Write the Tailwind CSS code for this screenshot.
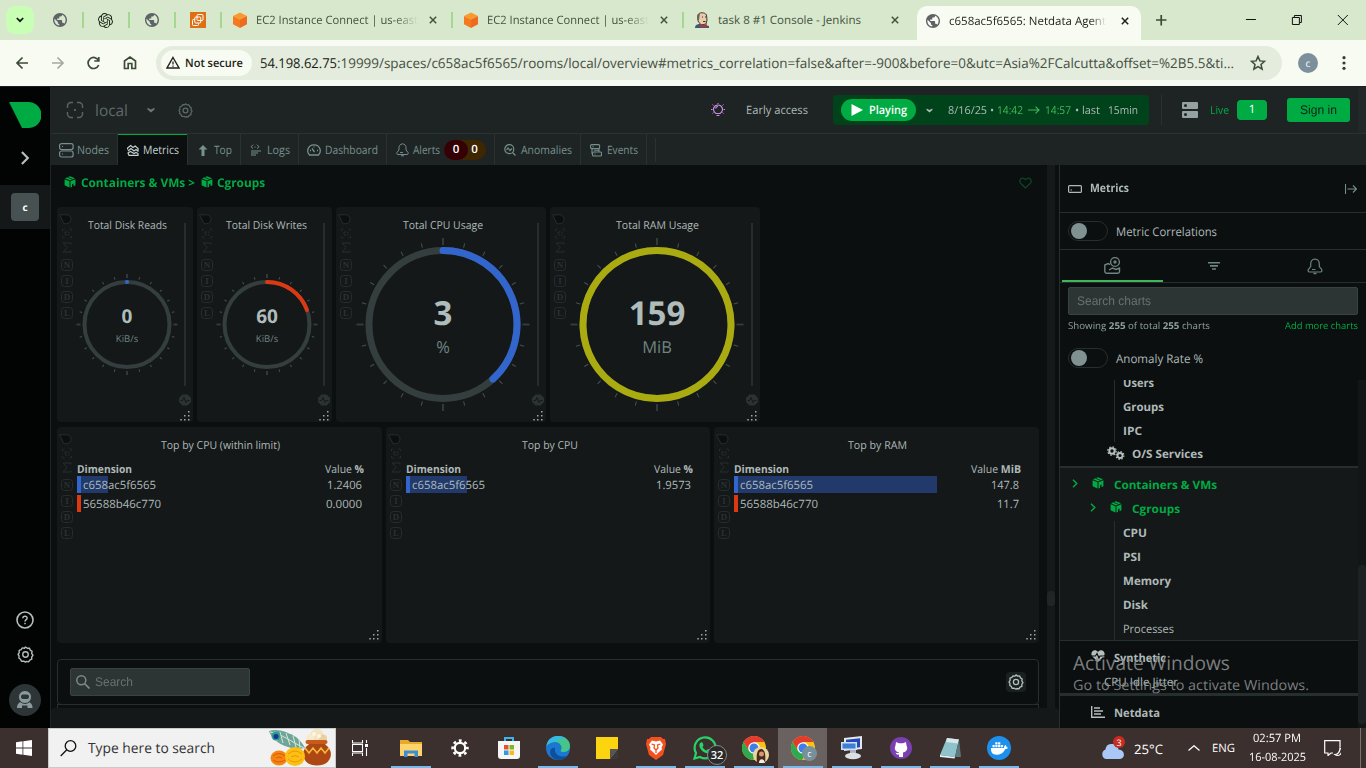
<!DOCTYPE html>
<html lang="en">
<head>
<meta charset="utf-8">
<title>c658ac5f6565: Netdata Agent</title>
<script src="https://cdn.jsdelivr.net/npm/@tailwindcss/browser@4"></script>
</head>
<body class="w-[1366px] h-[768px] overflow-hidden bg-[#0b0f10] font-['Open_Sans','Noto_Sans',sans-serif] text-[11.5px] whitespace-nowrap text-[#aeb9b8] leading-none [text-rendering:geometricPrecision]">
<svg class="hidden">
  <defs>
    <symbol id="globe" viewBox="2 2 20 20"><path fill="#5f6368" d="M12 2C6.480 2 2 6.480 2 12s4.480 10 10 10 10-4.480 10-10S17.520 2 12 2zm-1 17.930c-3.950-.49-7-3.850-7-7.930 0-.62.08-1.210.21-1.790L9 15v1c0 1.100.9 2 2 2v1.930zm6.900-2.540c-.26-.81-1-1.390-1.900-1.390h-1v-3c0-.55-.45-1-1-1H8v-2h2c.55 0 1-.45 1-1V7h2c1.100 0 2-.9 2-2v-.41c2.930 1.190 5 4.060 5 7.410 0 2.080-.8 3.970-2.100 5.390z"/></symbol>
    <symbol id="cube" viewBox="0 0 16 16"><path d="M8 .5 15 4 8 7.500 1 4z" fill="#fb9a2c"/><path d="M1 4l7 3.500V16l-7-3.700z" fill="#f47a20"/><path d="M15 4 8 7.500V16l7-3.700z" fill="#ee6a1f"/></symbol>
    <symbol id="x" viewBox="0 0 8 8"><path d="M.8.8l6.400 6.400M7.200.8.8 7.200" stroke="currentColor" stroke-width="1.500" fill="none"/></symbol>
    <symbol id="box" viewBox="0 0 12 12"><path d="M6 .3 11 2.300 6 4.500 1 2.300z" fill="currentColor"/><path d="M.6 3.200 5.500 5.300V11.600L.6 9.300z" fill="currentColor"/><path d="M11.400 3.200 6.500 5.300V11.600L8 10.900V8.300l1.500-.7v2.600l1.900-.9z" fill="currentColor"/><path d="M3.500 1.200l5 2.200" stroke="#0b0f10" stroke-width=".7"/></symbol>
    <symbol id="gear" viewBox="0 0 16 16"><path d="M8 .9l1.700 1.200 2-.1.800 1.900 1.700 1.100-.4 2L15 8.700l-1.200 1.700.1 2-1.900.8-1.100 1.700-2-.4L8 15.200l-1.700-1-2.100.2-.9-1.900-1.600-1.200.3-2L1 8l1.100-1.700-.1-2.100 1.900-.8L5 1.800l2 .3z" fill="none" stroke="currentColor" stroke-width="1.300" stroke-linejoin="round"/><circle cx="8" cy="8" r="2.600" fill="none" stroke="currentColor" stroke-width="1.300"/></symbol>
    <symbol id="bell" viewBox="0 0 16 17"><path d="M8 1C5 1.300 3.700 3.500 3.700 6v2.500L1.300 11.500C.8 13 1.200 14 2.500 14h11c1.300 0 1.700-1 1.200-2.500L12.300 8.500V6C12.300 3.500 11 1.300 8 1zM5 11.500h3.500" fill="none" stroke="currentColor" stroke-width="1.200"/><path d="M6.500 15.500h3" stroke="currentColor" stroke-width="1.400"/></symbol>
    <symbol id="chev" viewBox="0 0 6 9"><path d="M1 .7 4.800 4.500 1 8.300" fill="none" stroke="currentColor" stroke-width="1.400"/></symbol>
    <symbol id="down" viewBox="0 0 8 6"><path d="M.5.7 4 2.400 7.500.7v1.800L4 5.500.5 2.500z" fill="currentColor"/></symbol>
    <symbol id="tools" viewBox="0 0 16 108">
      <g fill="none" stroke="#272d2e" stroke-width="1">
        <path d="M.5.800h7c6 0 6 8.900 0 8.900H5z" fill="#0b0f10"/>
        <path d="M3.500 17v-2h2M10.500 15h2v2M12.500 22v2h-2M5.500 24h-2v-2M6 18h4v3H6z" stroke-dasharray="2 1"/>
        <path d="M12 30.500V29H4l4.200 4.500L4 38h8v-1.500"/>
        <rect x="2.500" y="45.500" width="11" height="11" rx="3"/><rect x="2.500" y="61.500" width="11" height="11" rx="3"/><rect x="2.500" y="77.500" width="11" height="11" rx="3"/><rect x="2.500" y="93.500" width="11" height="11" rx="3"/>
      </g>
      <g fill="#2b3132" font-family="Liberation Serif" font-size="9" font-weight="bold" text-anchor="middle"><text x="8" y="54">N</text><text x="8" y="70">I</text><text x="8" y="86">D</text><text x="8" y="102">L</text></g>
    </symbol>
    <symbol id="dots" viewBox="0 0 10 10"><path d="M8 0h1.500v1.500H8zM8 4h1.500v1.500H8zM4 4h1.500v1.500H4zM8 8h1.500v1.500H8zM4 8h1.500v1.500H4zM.3 8h1.500v1.500H.3z" fill="#a0a8a8"/></symbol>
    <symbol id="pulse" viewBox="0 0 12 12"><path d="M3.500.5h5L12 4v4l-3.500 3.500h-5L0 8V4z" fill="#2b3233"/><path d="M1.500 6.500h2L5 3.500l2 5 1.200-2h2.300" fill="none" stroke="#141819"/></symbol>
    <symbol id="chrome" viewBox="0 0 24 24"><circle cx="12" cy="12" r="12" fill="#fbc116"/><path d="M1.600 6A12 12 0 0 1 22.400 6H12L7 15z" fill="#e33b2e"/><path d="M1.600 6A12 12 0 0 0 11 24l5-9-9 0z" fill="#2da94f"/><circle cx="12" cy="12" r="5.800" fill="#fff"/><circle cx="12" cy="12" r="4.500" fill="#3f7de8"/></symbol>
  </defs>
</svg>

<!-- Browser tabs -->
<div class="h-10 bg-[#d8e8cd] flex items-center text-[#43523f]">
  <div class="w-7 h-7 ml-1.5 rounded-[9px] bg-[#c8ffb5] flex items-center justify-center"><svg class="w-2 h-1.5" viewBox="0 0 8 6"><path d="M.8 1 4 4.200 7.200 1" fill="none" stroke="#111" stroke-width="1.700"/></svg></div>
  <div class="w-[48px] flex items-center pl-[19px]"><svg class="w-3.5 h-3.5"><use href="#globe"/></svg></div>
  <div class="w-[46px] h-4 border-l-2 border-[#a5d692] flex items-center justify-center"><svg class="w-[15px] h-[15px]" viewBox="0 0 24 24" fill="#1d2a1a"><path d="M22.2819 9.8211a5.9847 5.9847 0 0 0-.5157-4.9108 6.0462 6.0462 0 0 0-6.5098-2.9A6.0651 6.0651 0 0 0 4.9807 4.1818a5.9847 5.9847 0 0 0-3.9977 2.9 6.0462 6.0462 0 0 0 .7427 7.0966 5.98 5.98 0 0 0 .511 4.9107 6.051 6.051 0 0 0 6.5146 2.9001A5.9847 5.9847 0 0 0 13.2599 24a6.0557 6.0557 0 0 0 5.7718-4.2058 5.9894 5.9894 0 0 0 3.9977-2.9001 6.0557 6.0557 0 0 0-.7475-7.0729zm-9.022 12.6081a4.4755 4.4755 0 0 1-2.8764-1.0408l.1419-.0804 4.7783-2.7582a.7948.7948 0 0 0 .3927-.6813v-6.7369l2.02 1.1686a.071.071 0 0 1 .038.052v5.5826a4.504 4.504 0 0 1-4.4945 4.4944zm-9.6607-4.1254a4.4708 4.4708 0 0 1-.5346-3.0137l.142.0852 4.783 2.7582a.7712.7712 0 0 0 .7806 0l5.8428-3.3685v2.3324a.0804.0804 0 0 1-.0332.0615L9.74 19.9502a4.4992 4.4992 0 0 1-6.1408-1.6464zM2.3408 7.8956a4.485 4.485 0 0 1 2.3655-1.9728V11.6a.7664.7664 0 0 0 .3879.6765l5.8144 3.3543-2.0201 1.1685a.0757.0757 0 0 1-.071 0l-4.8303-2.7865A4.504 4.504 0 0 1 2.3408 7.872zm16.5963 3.8558L13.1038 8.364 15.1192 7.2a.0757.0757 0 0 1 .071 0l4.8303 2.7913a4.4944 4.4944 0 0 1-.6765 8.1042v-5.6772a.79.79 0 0 0-.407-.667zm2.0107-3.0231l-.142-.0852-4.7735-2.7818a.7759.7759 0 0 0-.7854 0L9.409 9.2297V6.8974a.0662.0662 0 0 1 .0284-.0615l4.8303-2.7866a4.4992 4.4992 0 0 1 6.6802 4.66zM8.3065 12.863l-2.02-1.1638a.0804.0804 0 0 1-.038-.0567V6.0742a4.4992 4.4992 0 0 1 7.3757-3.4537l-.142.0805L8.704 5.459a.7948.7948 0 0 0-.3927.6813zm1.0976-2.3654l2.602-1.4998 2.6069 1.4998v2.9994l-2.5974 1.4997-2.6067-1.4997Z"/></svg></div>
  <div class="w-[46px] h-4 border-l-2 border-[#a5d692] flex items-center justify-center"><svg class="w-3.5 h-3.5"><use href="#globe"/></svg></div>
  <div class="w-[46px] h-4 border-l-2 border-[#a5d692] flex items-center justify-center"><svg class="w-4 h-4" viewBox="0 0 16 16"><path fill="#dc7013" d="M0 0h16v16H0z"/><g fill="none" stroke="#fff"><rect x="7" y="2.500" width="6" height="6" rx="1"/><rect x="4.800" y="5" width="6" height="6" rx="1"/><path d="M4.500 7.500h-1a1 1 0 0 0-1 1v4a1 1 0 0 0 1 1h4a1 1 0 0 0 1-1v-1"/></g></svg></div>
  <div class="w-[231px] h-4 border-l-2 border-[#a5d692] flex items-center pl-[10px]"><svg class="w-4 h-4 mr-2"><use href="#cube"/></svg><span class="w-[162px] overflow-hidden py-1 mask-r-from-85%"><span data-w="162">EC2 Instance Connect | us-east</span></span><svg class="w-2 h-2 ml-[11px]"><use href="#x"/></svg></div>
  <div class="w-[231px] h-4 border-l-2 border-[#a5d692] flex items-center pl-[10px]"><svg class="w-4 h-4 mr-2"><use href="#cube"/></svg><span class="w-[162px] overflow-hidden py-1 mask-r-from-85%"><span data-w="162">EC2 Instance Connect | us-east</span></span><svg class="w-2 h-2 ml-[11px]"><use href="#x"/></svg></div>
  <div class="w-[235px] h-4 border-l-2 border-[#a5d692] flex items-center pl-[10px]"><svg class="w-4 h-4 mr-2" viewBox="0 0 16 16"><path d="M4 3C5 0 11 0 12.500 3l.5 5-1 4-5 1-3-4z" fill="#e9cba9" stroke="#403a36"/><path d="M3.500 8C2.500 5 3 2 6 1L5 8z" fill="#6b625c"/><path d="M1 16c0-3 2-4 5-4l5 1 4 1v2z" fill="#3d5a75"/><path d="M6 12l4 1.500 3-1.500v3.500l-3-1-3 1z" fill="#d22b2b"/><path d="M8 5h1M11 5h1M9 9.500h2.500" stroke="#333"/></svg><span class="w-[170px]"><span data-w="143">task 8 #1 Console - Jenkins</span></span><svg class="w-2 h-2 ml-[3px]"><use href="#x"/></svg></div>
  <div class="w-[224px] ml-px h-[34px] self-end rounded-t-[10px] bg-[#f8fbf1] flex items-center pl-[9px] pb-[5px] text-[#1c221a]"><svg class="w-3.5 h-3.5 mr-[9px]"><use href="#globe"/></svg><span class="w-[157px] py-1 overflow-hidden mask-r-from-90%"><span data-w="157">c658ac5f6565: Netdata Agent</span></span><svg class="w-2 h-2 ml-[15px]"><use href="#x"/></svg></div>
  <svg class="w-[225px] h-10" viewBox="0 0 225 40" fill="none" stroke="#111"><path d="M15 20h10.500M20.250 15v10.500" stroke="#3b4a36" stroke-width="1.700"/><path d="M105 19.500h10M151.500 17.500h7v7h-7zM153.500 17v-1.500h7v7H159M197 15l10 10M207 15l-10 10"/></svg>
</div>

<!-- Address bar -->
<div class="h-[46px] bg-[#f8fbf1] flex items-center">
  <svg class="w-[156px] h-[46px]" viewBox="0 0 156 46" fill="none" stroke="#3c4a38" stroke-width="1.700"><path d="M28 23H17M22.500 17.500 17 23l5.500 5.500"/><path d="M52 23h11M57.500 17.500 63 23l-5.500 5.500" stroke="#a3aa9f"/><path d="M98.500 20.500a5.500 5.500 0 1 0 .2 4.500M98.800 17v4h-4.500"/><path d="M124.500 28.500V21l5.500-4 5.500 4v7.500h-3.700v-5h-3.600v5z"/></svg>
  <div class="w-[1126px] h-[34px] rounded-full bg-[#e4ecdd] flex items-center pl-[5px]">
    <div class="w-[91px] h-[26px] rounded-full bg-[#f8fbf1] flex items-center pl-[5px] text-[#1c221a] font-semibold"><svg class="w-3.5 h-3.5 mr-[5px]" viewBox="0 0 14 14" fill="none" stroke="#222"><path d="M7 1.500 13 12H1z" stroke-width="1.400"/><path d="M7 5.500v3M7 9.500v1.200" stroke-width="1.300"/></svg><span data-w="58">Not secure</span></div>
    <div class="w-[990px] ml-2 text-[13.500px] text-[#454f42]"><span class="text-[#161b14]" data-w="77">54.198.62.75</span><span data-w="897">:19999/spaces/c658ac5f6565/rooms/local/overview#metrics_correlation=false&amp;after=-900&amp;before=0&amp;utc=Asia%2FCalcutta&amp;offset=%2B5.5&amp;ti...</span></div>
    <svg class="w-4 h-4" viewBox="0 0 16 16"><path d="M8 1.500l1.900 4.400 4.700.4-3.600 3.100 1.100 4.700L8 11.600l-4.100 2.500L5 9.400 1.400 6.300l4.700-.4z" fill="none" stroke="#3c4a38" stroke-width="1.500"/></svg>
  </div>
  <div class="w-5 h-5 rounded-full bg-[#7b909c] text-white text-[10px] flex items-center justify-center ml-4">c</div>
  <svg class="w-1 h-3.5 ml-6" viewBox="0 0 4 14" fill="#333f2f"><circle cx="2" cy="1.700" r="1.600"/><circle cx="2" cy="7" r="1.600"/><circle cx="2" cy="12.300" r="1.600"/></svg>
</div>

<div class="h-[642px] flex border-t border-[#1b1f22] ">
  <!-- Left rail -->
  <nav class="w-[51px] bg-[#020303] border-r border-[#1f2425] flex flex-col items-center text-[#b5bfbe]">
    <svg class="w-8 h-[26px] mt-[15px]" viewBox="0 0 32 26"><path d="M0 0h19.500a12.500 12.500 0 0 1 0 26H13z" fill="#00ab44"/></svg>
    <svg class="w-2.5 h-3.5 mt-[23px]"  viewBox="0 0 6 9"><use href="#chev"/></svg>
    <div class="w-full h-[44px] mt-5 bg-[#141819] flex items-center justify-center"><span class="w-7 h-7 rounded bg-[#475152] text-white font-bold text-[10px] flex items-center justify-center">c</span></div>
    <svg class="w-[18px] h-[18px] mt-[382px]" viewBox="0 0 18 18"><circle cx="9" cy="9" r="8" fill="none" stroke="currentColor" stroke-width="1.600"/><path d="M6.800 7.200c.2-2.800 4.500-2.500 4.300 0C11 8.700 9 8.500 9 10.500M9 11.800v1.500" fill="none" stroke="currentColor" stroke-width="1.500"/></svg>
    <svg class="w-[17px] h-[17px] mt-[17px]"><use href="#gear"/></svg>
    <svg class="w-8 h-8 mt-[21px]" viewBox="0 0 32 32"><circle cx="16" cy="16" r="16" fill="#2d3536"/><path d="M8 24c0-5 3-6 5-6h5.500c2 0 5 1 5 6z" fill="#8b9b9b"/><path d="M13 24v-2.500h5.500V24" fill="#2d3536"/><circle cx="16" cy="13" r="6.500" fill="#8b9b9b" stroke="#2d3536"/><rect x="12" y="10.500" width="8" height="4.500" rx="2" fill="#2d3536"/></svg>
  </nav>

  <div class="w-[1315px] flex flex-col">
    <!-- Header -->
    <header class="h-[47px] bg-[#1e2424] border-b border-[#2a3131] flex items-center">
      <svg class="w-[18px] h-[18px] ml-[15px] text-[#5a6464]" viewBox="0 0 18 18" fill="none" stroke="currentColor" stroke-width="1.400"><path d="M1.500 7V5A3.500 3.500 0 0 1 5 1.500h2M11 1.500h2A3.500 3.500 0 0 1 16.500 5v2M16.500 11v2a3.500 3.500 0 0 1-3.500 3.500h-2M7 16.500H5A3.500 3.500 0 0 1 1.500 13v-2M8 9h2M9 8v2"/></svg>
      <span class="w-[57px] ml-[11px] text-[15.500px] text-[#5f6969]"><span data-w="33">local</span></span>
      <span class="-ml-[5px] text-[#6d7777]"><svg class="w-2 h-1.5"><use href="#down"/></svg></span>
      <svg class="w-[15px] h-[15px] ml-[23px] text-[#5f6969]"><use href="#gear"/></svg>
      <svg class="w-3.5 h-3.5 ml-[518px]" viewBox="0 0 14 14" fill="none" stroke="#c78be0"><path d="M5 10.500C2.500 8.500 2 7 2.700 5c1.500-4 7-4 8.600 0C12 7 11.500 8.500 9 10.500zM5.500 12.500h3M4.500 5.500C5 4 6 3.500 7 3.500" stroke-width="1.200"/><path d="M0 6.500h1.500M12.500 6.500H14M1.500 1.500l1 1M12.500 1.500l-1 1M7 0v1M1.500 10.500l1-1M12.500 10.500l-1-1"/></svg>
      <span class="w-[87px] ml-[21px] "><span data-w="62">Early access</span></span>
      <div class="w-[316px] h-[30px] rounded bg-[#00431a] flex items-center">
        <div class="w-[75px] h-[22px] ml-2 rounded-full bg-[#00ab44] flex items-center pl-2.5 text-white font-semibold"><svg class="w-3 h-3.5 mr-1.5" viewBox="0 0 12 14"><path d="M.5 1 12 7 .5 13z" fill="#fff"/></svg><span data-w="38">Playing</span></div>
        <span class="ml-2.5 mr-[15px]"><svg class="w-[7px] h-[5px]"><use href="#down"/></svg></span>
        <div class="flex gap-[3px] text-[11px]"><span data-w="46" data-y="0">8/16/25 •</span><span class="text-[#42b65b]" data-w="26" data-y="0">14:42</span></div>
        <svg class="w-3 h-2 mx-[5px]" viewBox="0 0 12 8"><path d="M0 4h11M7.500.7 11 4 7.500 7.300" fill="none" stroke="#42b65b" stroke-width="1.100"/></svg>
        <div class="flex text-[11px]"><span class="text-[#42b65b]" data-w="26" data-y="0">14:57</span><span class="ml-[4px]"><span data-w="25" data-y="0">• last</span></span><span class="ml-2"><span data-w="30" data-y="0">15min</span></span></div>
      </div>
      <div class="ml-3 w-px h-[30px] bg-[#2a3131]"></div>
      <svg class="w-4 h-4 ml-5" viewBox="0 0 16 16"><rect width="16" height="7" rx="1" fill="#94a3a2"/><rect y="9" width="16" height="7" rx="1" fill="#94a3a2"/><circle cx="3.500" cy="3.500" r="1.500" fill="#1e2424"/><circle cx="3.500" cy="12.500" r="1.500" fill="#1e2424"/></svg>
      <span class="ml-3 w-[27px] text-[11px] text-[#00ab44]"><span data-w="19" data-y="0">Live</span></span>
      <span class="w-[30px] h-5 rounded bg-[#00ab44] text-white flex items-center justify-center">1</span>
      <span class="w-[63px] h-6 ml-5 rounded-[3px] bg-[#00ab44] text-[#0b2313] flex items-center justify-center font-['Liberation_Sans'] text-[12.500px]"><span data-w="37" data-y="0">Sign in</span></span>
      <div class="w-2 h-[46px] ml-2 bg-[#22282a]"></div>
    </header>

    <!-- Navigation tabs -->
    <div class="h-8 -mb-px bg-[#1e2424] flex text-[#76908d] *:flex *:items-center *:border-r *:border-[#2a3131]">
      <div class="w-[67px] pl-2"><svg class="w-[15px] h-[15px] mr-[3px]" viewBox="0 0 15 15" fill="none" stroke="currentColor" stroke-width="1.200"><rect x=".6" y=".6" width="13.500" height="6" rx="2"/><rect x=".6" y="8" width="13.500" height="6" rx="2"/><path d="M3 3.500h1M3 11h1"/></svg><span data-w="32">Nodes</span></div>
      <div class="w-[70px] pl-[9px] bg-[#0b0f10] shadow-[inset_0_1px_0_#00ab44] text-[#c5d0cf]"><svg class="w-3 h-3 mr-1" viewBox="0 0 12 12" fill="none" stroke="currentColor" stroke-width="1.200"><path d="M.6 5.500V4l3-2.500 2.500 2 2-1.500 3 2.500v2M1 7l3-2.500L7 7l2-1.500 2.500 2M1 9l2.500-1.500L7 9.500l2-1L11 9.500v1.800H2z"/></svg><span data-w="36">Metrics</span></div>
      <div class="w-[53px] pl-[9px]"><svg class="w-2.5 h-[11px] mr-1.5 ml-[1px]" viewBox="0 0 10 11"><path d="M5 0l4.500 4.500h-3V11h-3V4.500h-3z" fill="currentColor"/></svg><span data-w="18">Top</span></div>
      <div class="w-[58px] pl-[9px]"><svg class="w-3 h-3 mr-[5px]" viewBox="0 0 12 12" fill="none" stroke="currentColor"><path d="M3 .7 1 2.700l2 1.800M7 .7l2 2-2 1.800M4.500 3h1M1 7h10M1 9h7M1 11h5"/></svg><span data-w="23">Logs</span></div>
      <div class="w-[88px] pl-2"><svg class="w-3.5 h-3 mr-1" viewBox="0 0 14 12" fill="none" stroke="currentColor" stroke-width="1.300"><path d="M2.500 11A6 6 0 0 1 7 .8 6 6 0 0 1 11.500 11zM7.500 8 5 4.500M3 6.500h1M7 2.500v1M11 6.500h-1"/></svg><span data-w="53">Dashboard</span></div>
      <div class="w-[108px] pl-2"><svg class="w-[15px] h-[14px] mr-[3px]"><use href="#bell"/></svg><span data-w="27">Alerts</span><div class="ml-1 w-[42px] h-5 rounded-full bg-[#3d2600] flex text-white font-semibold"><span class="w-6 h-5 rounded-full bg-[#340006] flex items-center justify-center">0</span><span class="w-[13px] flex items-center justify-center">0</span></div></div>
      <div class="w-[86px] pl-[9px]"><svg class="w-3 h-3 mr-[5px]" viewBox="0 0 12 12" fill="none" stroke="currentColor" stroke-width="1.200"><circle cx="5.300" cy="5.200" r="4.500"/><path d="M8.500 8.500 11.500 11.500M2.500 6l1.500-2 2 2.500L8 4.500"/></svg><span data-w="51">Anomalies</span></div>
      <div class="w-[66px] pl-[9px]"><svg class="w-3 h-[13px] mr-[5px]" viewBox="0 0 12 13" fill="none" stroke="currentColor" stroke-width="1.100"><rect x=".6" y=".6" width="9" height="4" rx="1"/><rect x="2.500" y="8" width="9" height="4" rx="1"/><path d="M2.500 2.600h1M4.500 10h1M2 5v5M9 5v3M4 6.300h5"/></svg><span data-w="31">Events</span></div>
      <div class="w-[9px] h-6 self-center"></div>
    </div>

    <div class="h-[563px] flex">
      <!-- Main content -->
      <div class="w-[1008px] flex flex-col">
        <main class="h-[543px] bg-[#0b0f10] flex overflow-hidden">
          <div class="w-[996px] pl-1.5 pt-px">
            <div class="h-[41px] flex items-center pb-[8px] text-[12px] font-bold text-[#00ab44]">
              <svg class="w-3 h-3 ml-[7px] mr-[4.500px] -mt-0.5"><use href="#box"/></svg><span data-w="114" data-y="0">Containers &amp; VMs &gt;</span><svg class="w-3 h-3 ml-[6.500px] mr-1 -mt-0.5"><use href="#box"/></svg><span data-w="48" data-y="0">Cgroups</span>
              <svg class="w-[13px] h-3 ml-[754px]" viewBox="0 0 13 12"><path d="M6.500 11 1.300 5.800C-.5 2.500 3.500-.8 6.500 2.500c3-3.300 7 0 5.200 3.300z" fill="none" stroke="#0a4a24" stroke-width="1.200"/></svg>
            </div>
            <div class="flex gap-1 h-[215px] text-[11px]">
              <div class="w-[136px] rounded bg-[#141819] flex" data-gauge data-r="42.5" data-sw="4" data-color="#3366cc" data-deg="0" data-value="0" data-unit="KiB/s" data-title="Total Disk Reads" data-tw="79"></div>
              <div class="w-[135px] rounded bg-[#141819] flex" data-gauge data-r="42.5" data-sw="4" data-color="#dc3912" data-deg="70" data-value="60" data-unit="KiB/s" data-title="Total Disk Writes" data-tw="81"></div>
              <div class="w-[210px] rounded bg-[#141819] flex" data-gauge data-r="74" data-sw="7" data-color="#3366cc" data-deg="137.5" data-value="3" data-unit="%" data-title="Total CPU Usage" data-tw="80"></div>
              <div class="w-[210px] rounded bg-[#141819] flex" data-gauge data-r="74" data-sw="7" data-color="#a9ab10" data-deg="359.5" data-value="159" data-unit="MiB" data-title="Total RAM Usage" data-tw="83"></div>
            </div>
            <div class="flex gap-1 h-[216px] mt-[5px] text-[11.500px] *:rounded *:bg-[#141819] *:flex *:relative">
              <div class="w-[325px]"><svg class="w-4 h-[108px] mt-[7px] mx-0.5"><use href="#tools"/></svg>
                <div class="w-[287px] flex flex-col">
                  <div class="h-[34px] pt-3 text-center text-[11px]"><span data-w="119">Top by CPU (within limit)</span></div>
                  <div class="h-[14px] flex justify-between items-center text-[11px]"><span class="font-bold" data-w="55">Dimension</span><span data-w="39">Value <b>%</b></span></div>
                  <div class="h-[19px] flex items-center pr-0.5"><span class="w-1 h-[17px] bg-[#3366cc]"></span><span class="h-[17px] w-[27px] bg-[#213a6b]"></span><span class="-ml-[25px] grow"><span data-w="73">c658ac5f6565</span></span><span data-w="35">1.2406</span></div>
                  <div class="h-[19px] flex items-center pr-0.5"><span class="w-1 h-[17px] mr-0.5 bg-[#dc3912]"></span><span class="grow"><span data-w="78">56588b46c770</span></span><span data-w="36">0.0000</span></div>
                </div><svg class="absolute right-[3px] bottom-[3px] w-2.5 h-2.5"><use href="#dots"/></svg></div>
              <div class="w-[324px]"><svg class="w-4 h-[108px] mt-[7px] mx-0.5"><use href="#tools"/></svg>
                <div class="w-[287px] flex flex-col">
                  <div class="h-[34px] pt-3 text-center text-[11px]"><span data-w="56">Top by CPU</span></div>
                  <div class="h-[14px] flex justify-between items-center text-[11px]"><span class="font-bold" data-w="55">Dimension</span><span data-w="39">Value <b>%</b></span></div>
                  <div class="h-[19px] flex items-center pr-0.5"><span class="w-1 h-[17px] bg-[#3366cc]"></span><span class="h-[17px] w-[57px] bg-[#213a6b]"></span><span class="-ml-[55px] grow"><span data-w="73">c658ac5f6565</span></span><span data-w="35">1.9573</span></div>
                </div><svg class="absolute right-[3px] bottom-[3px] w-2.5 h-2.5"><use href="#dots"/></svg></div>
              <div class="w-[325px]"><svg class="w-4 h-[108px] mt-[7px] mx-0.5"><use href="#tools"/></svg>
                <div class="w-[287px] flex flex-col">
                  <div class="h-[34px] pt-3 text-center text-[11px]"><span data-w="59">Top by RAM</span></div>
                  <div class="h-[14px] flex justify-between items-center text-[11px]"><span class="font-bold" data-w="55">Dimension</span><span data-w="50">Value <b>MiB</b></span></div>
                  <div class="h-[19px] flex items-center pr-0.5"><span class="w-1 h-[17px] bg-[#3366cc]"></span><span class="h-[17px] w-[199px] bg-[#213a6b]"></span><span class="-ml-[197px] grow"><span data-w="73">c658ac5f6565</span></span><span data-w="28">147.8</span></div>
                  <div class="h-[19px] flex items-center pr-0.5"><span class="w-1 h-[17px] mr-0.5 bg-[#dc3912]"></span><span class="grow"><span data-w="78">56588b46c770</span></span><span data-w="22">11.7</span></div>
                </div><svg class="absolute right-[3px] bottom-[3px] w-2.5 h-2.5"><use href="#dots"/></svg></div>
            </div>
            <div class="w-[982px] h-[46px] mt-4 rounded border border-[#272e2e] flex items-center pl-3 pr-3 justify-between">
              <div class="w-[180px] h-7 rounded-[2px] border border-[#394242] bg-[#2d3434] flex items-center pl-[5px] font-['Liberation_Sans'] text-[12.500px] text-[#66716f]"><svg class="w-3.5 h-3.5 mr-[5px]" viewBox="0 0 14 14"><circle cx="5.300" cy="5.300" r="4.500" fill="none" stroke="#7c8a89" stroke-width="1.500"/><path d="M8.500 8.500l5 5" stroke="#7c8a89" stroke-width="1.700"/></svg><span data-w="38" data-y="0">Search</span></div>
              <span class="w-5 h-5 rounded bg-[#1a1f20] flex items-center justify-center text-[#b5bfbe]"><svg class="w-4 h-4"><use href="#gear"/></svg></span>
            </div>
            <div class="w-[982px] h-2 -mt-px border-t border-x border-[#272e2e]"></div>
          </div>
          <div class="w-2 bg-[#14191a] pt-[426px]"><div class="w-2 h-[15px] rounded bg-[#202627]"></div></div>
        </main>
        <div class="h-5 rounded-t bg-[#141819]"></div>
      </div>

      <!-- Charts sidebar -->
      <aside class="w-[307px] border-l border-[#272e2e] bg-[#0b0f10] flex flex-col text-[12px]">
        <div class="h-[48px] border-b border-[#272e2e] flex items-center pl-2 pr-[9px]"><svg class="w-3.5 h-2 mr-2" viewBox="0 0 14 8"><rect x=".6" y=".6" width="12.800" height="6.800" rx="1" fill="none" stroke="#aeb9b8" stroke-width="1.200"/><path d="M2.500 5h1.500" stroke="#aeb9b8"/></svg><b class="grow text-[11.500px]"><span data-w="39" data-y="0">Metrics</span></b><svg class="w-3 h-2.5" viewBox="0 0 12 10"><path d="M.5 0v10M2.500 5H11M8 1.500 11.500 5 8 8.500" fill="none" stroke="#76908d" stroke-width="1.100"/></svg></div>
        <div class="h-[37px] border-b border-[#272e2e] flex items-center pl-2"><span class="w-10 h-5 rounded-full border border-[#272e2e] flex items-center pl-0.5 mr-2"><span class="w-4 h-4 rounded-full bg-[#7f9190]"></span></span><span data-w="101">Metric Correlations</span></div>
        <div class="h-[33px] border-b border-[#272e2e] flex text-[#6f8381] pl-[2px] *:w-[101px] *:flex *:items-center *:justify-center">
          <div class="border-b-2 border-[#3fb55c]"><svg class="w-[17px] h-[17px]" viewBox="0 0 17 17" fill="none" stroke="currentColor" stroke-width="1.400"><circle cx="11" cy="5" r="4.400"/><circle cx="11" cy="5" r="1"/><path d="M6 7.500 4 6.500.8 8v6.500c0 1 .7 1.700 1.700 1.700h11.300c1 0 1.700-.7 1.700-1.700V11L12 12.500 8.500 11 5 13"/></svg></div>
          <div><svg class="w-3 h-2" viewBox="0 0 12 8" stroke="currentColor" stroke-width="1.600"><path d="M0 .8h12M2 3.900h8M4 7h4"/></svg></div>
          <div><svg class="w-4 h-[17px]"><use href="#bell"/></svg></div>
        </div>
        <div class="w-[290px] h-7 mt-1 ml-2 rounded-[2px] border border-[#394242] bg-[#2d3434] flex items-center pl-2 font-['Liberation_Sans'] text-[12.500px] text-[#66716f]"><span data-w="74" data-y="0">Search charts</span></div>
        <div class="w-[290px] ml-2 h-[21px] flex items-center justify-between text-[9.500px] text-[#8fa09e]"><span data-w="142" data-y="0">Showing <b>255</b> of total <b>255</b> charts</span><span class="text-[#00ab44]" data-w="73" data-y="0">Add more charts</span></div>
        <div class="h-[44px] flex items-center pl-2"><span class="w-10 h-5 rounded-full border border-[#272e2e] flex items-center pl-0.5 mr-2"><span class="w-4 h-4 rounded-full bg-[#7f9190]"></span></span><span data-w="87">Anomaly Rate %</span></div>
        <div class="h-[348px] flex overflow-hidden">
          <div class="w-[298px] font-bold text-[11.500px] *:shrink-0">
            <div class="ml-[54px] -mt-[9px] h-[71px] border-l border-[#272e2e] pl-2 *:h-6 *:flex *:items-center"><div><span data-w="31">Users</span></div><div><span data-w="41">Groups</span></div><div><span data-w="19">IPC</span></div></div>
            <div class="h-[24px] flex items-center pl-[47px]"><svg class="w-[18px] h-[14px] mr-[7px] -mt-0.5" viewBox="0 0 18 14" fill="none" stroke="#b5bfbe"><circle cx="5" cy="5" r="2.700" stroke-width="2"/><circle cx="5" cy="5" r="4.200" stroke-width="1.200" stroke-dasharray="1.600 1.700"/><circle cx="13" cy="9.500" r="2.500" stroke-width="1.800"/><circle cx="13" cy="9.500" r="3.900" stroke-width="1.200" stroke-dasharray="1.500 1.560"/></svg><span data-w="71">O/S Services</span></div>
            <div class="h-[175px] border-t-2 border-b border-[#272e2e] bg-[#141819] pt-[5px]">
              <div class="h-6 flex items-center pl-3 text-[#00ab44]"><svg class="w-1.5 h-[9px] mr-[14px] -mt-1"><use href="#chev"/></svg><svg class="w-3 h-3 mr-[10px] -mt-1"><use href="#box"/></svg><span data-w="103">Containers &amp; VMs</span></div>
              <div class="h-6 flex items-center pl-[30px] text-[#00ab44]"><svg class="w-1.5 h-[9px] mr-[14px] -mt-1"><use href="#chev"/></svg><svg class="w-3 h-3 mr-[10px] -mt-1"><use href="#box"/></svg><span data-w="48">Cgroups</span></div>
              <div class="ml-[54px] h-[119px] border-l border-[#272e2e] pl-2 *:h-6 *:flex *:items-center"><div><span data-w="24">CPU</span></div><div><span data-w="18">PSI</span></div><div><span data-w="48">Memory</span></div><div><span data-w="25">Disk</span></div><div class="font-normal"><span data-w="51">Processes</span></div></div>
            </div>
            <div class="h-[55px] border-b-[3px] border-[#272e2e] pt-[5px]">
              <div class="h-6 flex items-center pl-[31px]"><svg class="w-3.5 h-3 mr-[9px] -mt-1" viewBox="0 0 14 12"><path d="M7 12 1 6C-1.500 2 4-2 7 2c3-4 8.500 0 6 4z" fill="#b5bfbe"/><path d="M0 6h4.500L6 3.500 8 8l1-2h5" fill="none" stroke="#0b0f10" stroke-width="1.200"/></svg><span data-w="52">Synthetic</span></div>
              <div class="h-6 flex items-center pl-[44px] font-normal"><span data-w="74">CPU Idle Jitter</span></div>
            </div>
            <div class="h-[34px] flex items-center pl-[31px]"><svg class="w-3.5 h-3 mr-[9px] -mt-0.5" viewBox="0 0 14 12" fill="none" stroke="#b5bfbe"><path d="M.7 0v11.300H14M3 2h6M3 5h9M3 8h7" stroke-width="1.400"/></svg><span data-w="46">Netdata</span></div>
          </div>
          <div class="w-2 bg-[#121617] pt-[185px]"><div class="h-[159px] rounded bg-[#1c2223]"></div></div>
        </div>
      </aside>
    </div>
  </div>
</div>

<!-- Taskbar -->
<footer class="relative z-10 h-10 bg-[#3b302e] flex items-center text-white">
  <div class="w-12 flex justify-center"><svg class="w-4 h-4" viewBox="0 0 16 16" fill="#fff"><path d="M0 2.200 6.500 1.300V7.600H0zM7.300 1.200 16 0v7.600H7.300zM0 8.400h6.500v6.300L0 13.800zM7.300 8.400H16V16l-8.700-1.200z"/></svg></div>
  <div class="w-[288px] h-10 border border-[#c9c9c9] bg-[#f1f1f1] flex items-center pl-[11px] text-[#333] text-[14px]">
    <svg class="w-[17px] h-[17px] mr-[11px]" viewBox="0 0 17 17" fill="none" stroke="#111" stroke-width="1.300"><circle cx="10.500" cy="6" r="5.300"/><path d="M6.800 9.800.7 16"/></svg><span class="w-[180px]"><span data-w="127">Type here to search</span></span>
    <svg class="w-[64px] h-[38px]" viewBox="0 0 64 38"><path d="M1 2C9-1 20 3 28 8 32 11 35 15 37 19 22 22 5 14 1 2z" fill="#6da59b"/><path d="M2 3C14 5 22 12 36 19M12 3l3 11M18 4l4 12M25 7l3 11M7 2l2 10M31 10l1 9" stroke="#dbe6d4" fill="none"/><circle cx="8" cy="7" r="4.500" fill="#2c9c8f"/><circle cx="8" cy="7.500" r="2.500" fill="#20309a"/><circle cx="49" cy="7" r="7" fill="#f3e3c1"/><circle cx="42" cy="9.500" r="4" fill="#f7ead0"/><circle cx="55" cy="9.500" r="4" fill="#e8d0a3"/><circle cx="46" cy="5" r="2" fill="#fff6e0"/><circle cx="51" cy="7" r="2" fill="#fff6e0"/><rect x="37.500" y="11" width="22" height="4" rx="2" fill="#c85b1b"/><path d="M41 15h16c4 4 7 7 5.500 13-2.500 7-8 8.500-13.500 8.500S38 35 35.500 28C34 22 37 19 41 15z" fill="#ad4713"/><path d="M37 19l4 5 4-5 4 5 4-5 4 5 4-5" fill="none" stroke="#f6b73c" stroke-width="1.600"/><ellipse cx="11" cy="29" rx="8.500" ry="7.500" fill="#f58412"/><path d="M5 27q6-5 12 0M5 31q6 4 12 0M8 29q3-2 6 0" fill="none" stroke="#d85c05"/><ellipse cx="27" cy="27.500" rx="10" ry="9.500" fill="#fdbf14"/><path d="M20 25q7-6 14 0M20 30q7 6 14 0M23 28q4-3 8 0" fill="none" stroke="#e89a06"/></svg>
  </div>
  <div class="w-[50px] flex justify-center pr-[2px]"><svg class="w-4 h-4" viewBox="0 0 16 16" fill="none" stroke="#fff" stroke-width="1.100"><path d="M.5 0v3h10V0M.5 16v-3h10v3M.5 4.500h10v7H.5zM14.500 0v3M14.500 8v8"/><path d="M13 4h3v3h-3z" fill="#fff" stroke="none"/></svg></div>
  <div class="flex h-10 *:w-[49px] *:h-10 *:flex *:items-center *:justify-center *:bg-no-repeat *:bg-bottom *:bg-[length:40px_2px]">
    <div class="bg-[linear-gradient(#76b9ed,#76b9ed)]"><svg class="w-[22px] h-[18px]" viewBox="0 0 22 18"><path d="M0 1h8l2 2h12v13H0z" fill="#e8a92e"/><path d="M0 5h22v12H0z" fill="#fdd56b"/><path d="M4 18v-6.500h14V18h-3.500v-3.500h-7V18z" fill="#3c8fd6"/></svg></div>
    <div><svg class="w-[18px] h-[18px]" viewBox="0 0 18 18" fill="none" stroke="#fff"><circle cx="9" cy="9" r="5.200" stroke-width="2.200"/><circle cx="9" cy="9" r="7.400" stroke-width="2.600" stroke-dasharray="2.800 3.011" stroke-dashoffset="1.400"/></svg></div>
    <div><svg class="w-6 h-6" viewBox="0 0 24 24"><path d="M8 6V2h8v4" fill="none" stroke="#3bb3ef" stroke-width="2"/><path d="M1 5h22v15a3 3 0 0 1-3 3H4a3 3 0 0 1-3-3z" fill="#f5f5f5"/><path d="M7 9h4.500v4.500H7z" fill="#e8502d"/><path d="M12.500 9H17v4.500h-4.500z" fill="#7bb928"/><path d="M7 14.500h4.500V19H7z" fill="#2a9be4"/><path d="M12.500 14.500H17V19h-4.500z" fill="#fbb91c"/></svg></div>
    <div class="bg-[linear-gradient(#76b9ed,#76b9ed)]"><svg class="w-6 h-6" viewBox="0 0 24 24"><circle cx="12" cy="12" r="12" fill="#1b78d0"/><path d="M.5 10C2 2 8 0 12 0c8 0 12 5 12 10 0 4-3 6-7 6-2 0-3-1-2-2 2-3-1-8-6-8-4 0-7 2-8.500 4z" fill="#45c58a"/><path d="M.5 10C2 2 8 0 12 0c3 0 6 1 8 3-6-1-8 1-11 3-4 0-7 2-8.500 4z" fill="#35b9e6"/><path d="M9 12c-1 6 4 10 12 8-4 5-11 5-15 1-4-5-1-10 3-9z" fill="#0d4f9a"/></svg></div>
    <div><svg class="w-[22px] h-[22px]" viewBox="0 0 22 22"><path d="M0 0h22v12L14 22H0z" fill="#fcd40f"/><path d="M22 12 14 22h8z" fill="#3b3a38"/><path d="M22 12h-8v10z" fill="#555"/></svg></div>
    <div class="bg-[linear-gradient(#76b9ed,#76b9ed)]"><svg class="w-5 h-6" viewBox="0 0 20 24"><path d="M5 1h10l2 2h2l1 5-3 11-7 5-7-5L0 8l1-5h2z" fill="#f4511e"/><path d="M6 4.500l4 1 4-1 3 4-1.500 3 .5 2-3.500 3L10 19l-2.500-2.500L4 13.500l.5-2L3 8.500z" fill="#fff"/><path d="M5.500 8l3 1L8 12l2 2 2-2-.5-3 3-1M10 14v3" fill="none" stroke="#f4511e" stroke-width="1.300"/></svg></div>
    <div class="bg-[linear-gradient(#76b9ed,#76b9ed)] relative"><svg class="w-6 h-6" viewBox="0 0 24 24"><path d="M1.500 22.500 3 17A10.500 10.500 0 1 1 7 21z" fill="none" stroke="#27d367" stroke-width="2.200"/><path d="M7 7c3-2 3 1 3.500 2.500L9.500 11c1 2 2.500 3 4 3.500L15 13l3 1.500c0 3-3 3.500-5 2.500C8 15.500 5 10 7 7z" fill="#27d367"/></svg><span class="absolute left-[27px] top-[17px] w-5 h-5 rounded-full bg-[#2b2b2b] border border-[#888] flex items-center justify-center text-[11px] font-semibold">32</span></div>
    <div class="bg-[linear-gradient(#76b9ed,#76b9ed)] relative"><svg class="w-6 h-6"><use href="#chrome"/></svg><svg class="absolute left-[24px] top-[19px] w-4 h-4" viewBox="0 0 16 16"><circle cx="8" cy="8" r="8" fill="#e9d59f"/><path d="M4 16C3 8 4 2 8 2s5 6 4 14z" fill="#4b2b1c"/><circle cx="8.500" cy="7" r="2.500" fill="#d49a73"/><path d="M6 16c0-5 5-5 6 0z" fill="#eee"/></svg></div>
    <div class="bg-[linear-gradient(#76b9ed,#76b9ed)] relative bg-[#6a6260]"><svg class="w-6 h-6"><use href="#chrome"/></svg><span class="absolute left-[24px] top-[18px] w-[15px] h-[15px] rounded-full bg-[#78909c] text-[9px] flex items-center justify-center">c</span></div>
    <div class="bg-[linear-gradient(#76b9ed,#76b9ed)]"><svg class="w-6 h-6" viewBox="0 0 24 24"><path d="M4 2 22 0v13L4 15z" fill="#e6e8ec"/><path d="M6 3.800 20 2.200v9L6 12.800z" fill="#2348b8"/><path d="M1 6h16v8H1z" fill="#cfe0f3"/><path d="M2.500 7.500h13v5h-13z" fill="#3d7ed8"/><path d="M10 14h6v4h-6z" fill="#aeb4bd"/><ellipse cx="13" cy="20" rx="8" ry="3.300" fill="#dcdfe4"/></svg></div>
    <div class="bg-[linear-gradient(#76b9ed,#76b9ed)]"><svg class="w-[22px] h-[22px]" viewBox="0 0 22 22"><circle cx="11" cy="11" r="11" fill="#7a3fb0"/><path d="M6 5l3 1.300h4L16 5l.5 3.500c2 4-.5 6.500-3.500 7v4.500H9v-2.500c-2 .5-3-.5-3.500-2 1 .3 2 .8 3.500.5v-.5c-3-.5-5.500-3-3.500-7z" fill="#fff"/></svg></div>
    <div class="bg-[linear-gradient(#76b9ed,#76b9ed)]"><svg class="w-[22px] h-[22px]" viewBox="0 0 22 22"><path d="M8 1l12 1.500-4 17.500L1 18z" fill="#8fc3cb"/><path d="M8 1l12 1.500-1 4-12-1.500z" fill="#d8e8ea"/><path d="M20 2.500 22 20l-6 0z" fill="#5d777c"/><path d="M1 18l15 2-.5 1.500L1 20z" fill="#e9eff0"/></svg></div>
    <div class="bg-[linear-gradient(#76b9ed,#76b9ed)]"><svg class="w-6 h-6" viewBox="0 0 24 24"><circle cx="12" cy="12" r="12" fill="#1d90ee"/><path d="M4 12h13c0-1.500.5-2.500 1.500-3 .8.8 1 1.500 1 2.200l1.500.3c-.5 1.300-1.500 1.700-3 1.700-1.500 4-5 5.500-8.500 5.500-4 0-5.800-2.500-5.500-6.700zM5.500 9h2.200v2.300H5.500zM8.300 9h2.200v2.300H8.300zM11.100 9h2.200v2.300h-2.200zM13.900 9h2.200v2.300h-2.200zM8.300 6.200h2.200v2.200H8.300zM11.100 6.200h2.200v2.200h-2.200z" fill="#fff"/></svg></div>
  </div>
  <svg class="w-[25px] h-6 ml-[78px] mr-2" viewBox="0 0 25 24"><path d="M5 23a5 5 0 0 1-.5-9.500C5 9 8 8 11 8c4 0 6 2.500 6.500 5.500C25 14 24 23 19 23z" fill="#a9c8f8"/><circle cx="18" cy="6" r="6" fill="#c92b20"/><text x="18" y="9.500" font-size="9" fill="#fff" text-anchor="middle">3</text></svg>
  <span class="w-[53px] text-[13px]"><span data-w="29">25°C</span></span>
  <svg class="w-3 h-1.5 mr-[12px] ml-[1px]" viewBox="0 0 12 6"><path d="M.5 5.500 6 .7l5.500 4.800" fill="none" stroke="#fff" stroke-width="1.200"/></svg>
  <span class="w-[31px]"><span data-w="23">ENG</span></span>
  <div class="w-[68px] text-center flex flex-col gap-[7px]"><div><span data-w="48" data-y="0">02:57 PM</span></div><div><span data-w="57" data-y="0">16-08-2025</span></div></div>
  <svg class="w-[17px] h-4 ml-[13px]" viewBox="0 0 17 16" fill="none" stroke="#fff" stroke-width="1.200"><path d="M9 13H7l-3 2.500V13H.7V.7H16V7M16 8a4 4 0 0 1-5 6.500c3 0 5-3 5-6.500z"/></svg>
  <div class="ml-[19px] w-px h-10 bg-[#7b7371]"></div>
</footer>

<div class="absolute left-[1073px] top-[652px] text-[#8a8d8d]/90"><div class="text-[19.500px] leading-[20px]"><span data-w="157">Activate Windows</span></div><div class="text-[14px] leading-[26px]"><span data-w="236">Go to Settings to activate Windows.</span></div></div>

<script>
  // Gauge cards: title, ring with 24 ticks, value and unit
  document.querySelectorAll('[data-gauge]').forEach(function (el) {
    var d = el.dataset, r = +d.r, sw = +d.sw, big = r > 60, o = r + sw / 2, s = '';
    for (var i = 0; i < 24; i++) {
      var major = i % 6 === 0, a = o + 2, b = a + (big ? (major ? 7 : 4.5) : (major ? 4 : 2.5));
      s += '<line x1="0" x2="0" y1="' + -a + '" y2="' + -b + '" stroke="' + (major ? '#353e3e' : '#465050') + '" stroke-width="' + (major ? 1.8 : 1) + '" transform="rotate(' + i * 15 + ')"/>';
    }
    var t = (+d.deg + 0.1) * Math.PI / 180, x = r * Math.sin(t), y = -r * Math.cos(t);
    s += '<circle r="' + r + '" fill="none" stroke="#353e3e" stroke-width="' + sw + '"/>';
    s += '<path d="M0 ' + -r + 'A' + r + ' ' + r + ' 0 ' + (+d.deg > 180 ? 1 : 0) + ' 1 ' + x + ' ' + y + '" fill="none" stroke-linecap="round" stroke="' + d.color + '" stroke-width="' + sw + '"/>';
    s += '<text text-anchor="middle" y="' + (big ? 0 : -1.5) + '" font-weight="700" font-size="' + (big ? 33 : 19) + '" fill="#b0bcba">' + d.value + '</text>';
    s += '<text text-anchor="middle" y="' + (big ? 28.5 : 17.5) + '" font-size="' + (big ? 16.5 : 9.5) + '" fill="#6f8381">' + d.unit + '</text>';
    el.innerHTML = '<svg class="w-4 h-[108px] mt-[7px] mx-0.5 shrink-0"><use href="#tools"/></svg>' +
      '<div class="grow flex flex-col items-center"><div class="h-[28px] pt-3"><span data-w="' + d.tw + '">' + d.title + '</span></div>' +
      '<svg class="w-[176px] h-[180px] -mx-10" viewBox="-88 -89.5 176 180">' + s + '</svg></div>' +
      '<div class="w-4 flex flex-col items-center shrink-0"><div class="mt-4 w-0.5 h-[163px] bg-[#272d2e]"></div><svg class="w-3 h-3 mt-2 shrink-0"><use href="#pulse"/></svg><svg class="w-2.5 h-2.5 mt-[5px] shrink-0"><use href="#dots"/></svg></div>';
  });
  function fit() {
    document.querySelectorAll('[data-w]').forEach(function (el) {
      el.style.display = 'inline-block';
      el.style.flexShrink = 0;
      el.style.transform = 'none';
      el.style.marginRight = '0px';
      el.style.width = 'max-content';
      var target = +el.dataset.w, w = el.getBoundingClientRect().width;
      el.style.transformOrigin = 'left';
      el.style.transform = 'translateY(' + (el.dataset.y || 1) + 'px) scaleX(' + target / w + ')';
      el.style.marginRight = (target - w) + 'px';
    });
  }
  fit();
  window.addEventListener('load', function () { fit(); requestAnimationFrame(fit); setTimeout(fit, 100); });
  document.fonts.ready.then(fit);
</script>
</body>
</html>
